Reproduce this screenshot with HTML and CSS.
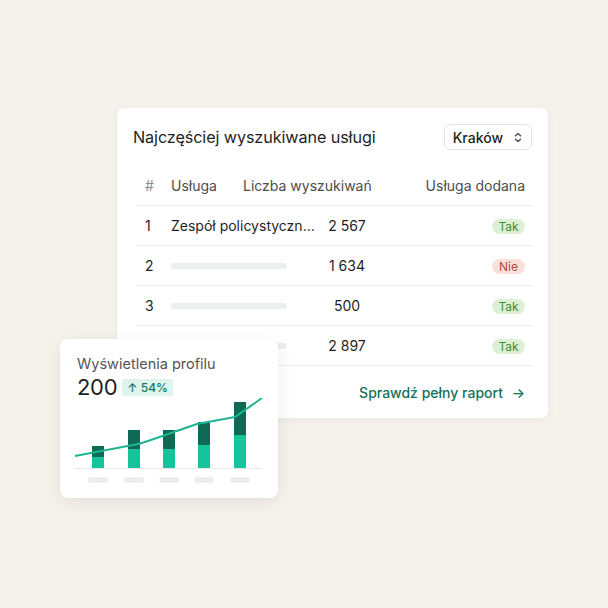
FILE: index.html
```html
<!DOCTYPE html>
<html lang="pl">
<head>
    <meta charset="UTF-8">
    <title>Najczęściej wyszukiwane usługi</title>
    <link rel="stylesheet" href="styles.css">
</head>
<body>
    <div class="stage">
        <section class="report">
            <header class="report-head">
                <h2>Najczęściej wyszukiwane usługi</h2>
                <div class="select">
                    <span>Kraków</span>
                    <svg width="8" height="11" viewBox="0 0 8 11" fill="none" stroke="#444" stroke-width="1.3" stroke-linecap="round" stroke-linejoin="round">
                        <path d="M1.5 3.8 4 1.5 6.5 3.8"/>
                        <path d="M1.5 7.2 4 9.5 6.5 7.2"/>
                    </svg>
                </div>
            </header>

            <div class="table">
                <div class="thead">
                    <span class="hash">#</span>
                    <span>Usługa</span>
                    <span>Liczba wyszukiwań</span>
                    <span class="right">Usługa dodana</span>
                </div>
                <div class="row">
                    <span>1</span>
                    <span class="name">Zespół policystyczn...</span>
                    <span class="num">2 567</span>
                    <span class="right"><span class="pill yes">Tak</span></span>
                </div>
                <div class="row">
                    <span>2</span>
                    <span class="skeleton"></span>
                    <span class="num">1 634</span>
                    <span class="right"><span class="pill no">Nie</span></span>
                </div>
                <div class="row">
                    <span>3</span>
                    <span class="skeleton"></span>
                    <span class="num">500</span>
                    <span class="right"><span class="pill yes">Tak</span></span>
                </div>
                <div class="row">
                    <span>4</span>
                    <span class="skeleton"></span>
                    <span class="num">2 897</span>
                    <span class="right"><span class="pill yes">Tak</span></span>
                </div>
            </div>

            <footer class="report-foot">
                <a href="#">Sprawdź pełny raport <span class="arrow">&rarr;</span></a>
            </footer>
        </section>

        <!-- karta z wykresem nachodzi na tabele -->
        <section class="views">
            <p class="views-title">Wyświetlenia profilu</p>
            <div class="views-value">
                <strong>200</strong>
                <span class="trend">&uarr; 54%</span>
            </div>
            <svg class="chart" width="218" height="92" viewBox="0 0 218 92">
                <line x1="15" y1="70.5" x2="202" y2="70.5" stroke="#e6e6e6" stroke-width="1"/>

                <rect x="32" y="48" width="12" height="11" fill="#0e6a54"/>
                <rect x="32" y="59" width="12" height="11" fill="#16c49b"/>
                <rect x="68" y="32" width="12" height="19" fill="#0e6a54"/>
                <rect x="68" y="51" width="12" height="19" fill="#16c49b"/>
                <rect x="103" y="32" width="12" height="19" fill="#0e6a54"/>
                <rect x="103" y="51" width="12" height="19" fill="#16c49b"/>
                <rect x="138" y="24" width="12" height="23" fill="#0e6a54"/>
                <rect x="138" y="47" width="12" height="23" fill="#16c49b"/>
                <rect x="174" y="4" width="12" height="33" fill="#0e6a54"/>
                <rect x="174" y="37" width="12" height="33" fill="#16c49b"/>

                <path d="M15 58 L73 47 Q80 46 88 43 L137 26 L175 19 L202 0" fill="none" stroke="#1db592" stroke-width="2" stroke-linejoin="round"/>

                <rect x="28" y="79" width="20" height="6" rx="3" fill="#eceef0"/>
                <rect x="64" y="79" width="20" height="6" rx="3" fill="#eceef0"/>
                <rect x="99" y="79" width="20" height="6" rx="3" fill="#eceef0"/>
                <rect x="134" y="79" width="20" height="6" rx="3" fill="#eceef0"/>
                <rect x="170" y="79" width="20" height="6" rx="3" fill="#eceef0"/>
            </svg>
        </section>
    </div>
</body>
</html>
```

FILE: styles.css
```css
body{
    margin: 0;
    background: #f5f1eb;
    font-family: Inter, "Noto Sans", sans-serif;
    color: #1f1f1f;
}

.stage{
    position: relative;
    width: 608px;
    height: 608px;
    overflow: hidden;
    padding-top: 108px;
    box-sizing: border-box;
}

/* karta z tabela */
.report{
    width: 431px;
    height: 310px;
    margin-left: 117px;
    padding: 16px 15px 0 16px;
    box-sizing: border-box;
    background: white;
    border-radius: 7px;
    box-shadow: 0 2px 10px rgba(0,0,0,.05);
}

.report-head{
    display: flex;
    align-items: center;
    justify-content: space-between;
    height: 26px;
}
.report-head h2{
    margin: 0;
    font-size: 16.2px;
    font-weight: 400;
    letter-spacing: -0.1px;
}

.select{
    display: flex;
    align-items: center;
    gap: 11px;
    height: 26px;
    margin-right: 1px;
    padding: 0 9px 0 8px;
    box-sizing: border-box;
    border: 1px solid #e3e3e3;
    border-radius: 6px;
    font-size: 14px;
    font-weight: 500;
}

.table{
    margin: 15px 0 0 3px;
    font-size: 14px;
}

.thead, .row{
    display: grid;
    align-items: center;
    height: 40px;
    box-sizing: border-box;
    border-bottom: 1px solid #ededed;
    white-space: nowrap;
}
.thead{
    grid-template-columns: 35px 72px auto 1fr;
    color: #4d4d4d;
    height: 41px;
}
.row{
    grid-template-columns: 35px 140px 72px 1fr;
}
.thead > span:first-child, .row > span:first-child{
    padding-left: 9px;
}
.hash{
    color: #8a8a8a;
}
.name{
    overflow: visible;
}
.right{
    text-align: right;
    padding-right: 8px;
}
.num{
    text-align: center;
}

.skeleton{
    display: block;
    width: 116px;
    height: 6px;
    border-radius: 3px;
    background: #eceef0;
}

.pill{
    display: inline-block;
    width: 33px;
    height: 15px;
    line-height: 15px;
    border-radius: 8px;
    text-align: center;
    font-size: 12px;
}
.yes{
    background: #dcf1d3;
    color: #3f8a33;
}
.no{
    background: #fbe0da;
    color: #b24a3c;
}

.report-foot{
    display: flex;
    justify-content: flex-end;
    align-items: center;
    height: 52px;
    padding-right: 8px;
}
.report-foot a{
    color: #177058;
    text-decoration: none;
    font-size: 14px;
    font-weight: 500;
}
.arrow{
    margin-left: 5px;
}

/* karta z wykresem */
.views{
    position: absolute;
    left: 60px;
    top: 339px;
    width: 218px;
    height: 159px;
    padding: 15px 0 0 17px;
    box-sizing: border-box;
    background: white;
    border-radius: 8px;
    box-shadow: 0 4px 18px rgba(0,0,0,.08);
}
.views-title{
    margin: 0;
    height: 20px;
    line-height: 20px;
    font-size: 14.5px;
    color: #555;
}
.views-value{
    display: flex;
    align-items: center;
    gap: 5px;
    height: 22px;
    margin-top: 2px;
}
.views-value strong{
    font-size: 22px;
    font-weight: 400;
    letter-spacing: -0.3px;
}
.trend{
    height: 17px;
    line-height: 17px;
    padding: 0 5px;
    border-radius: 3px;
    background: #def5ee;
    color: #14785f;
    font-size: 12px;
    font-weight: 500;
}
.chart{
    display: block;
    margin-left: -17px;
}
```
